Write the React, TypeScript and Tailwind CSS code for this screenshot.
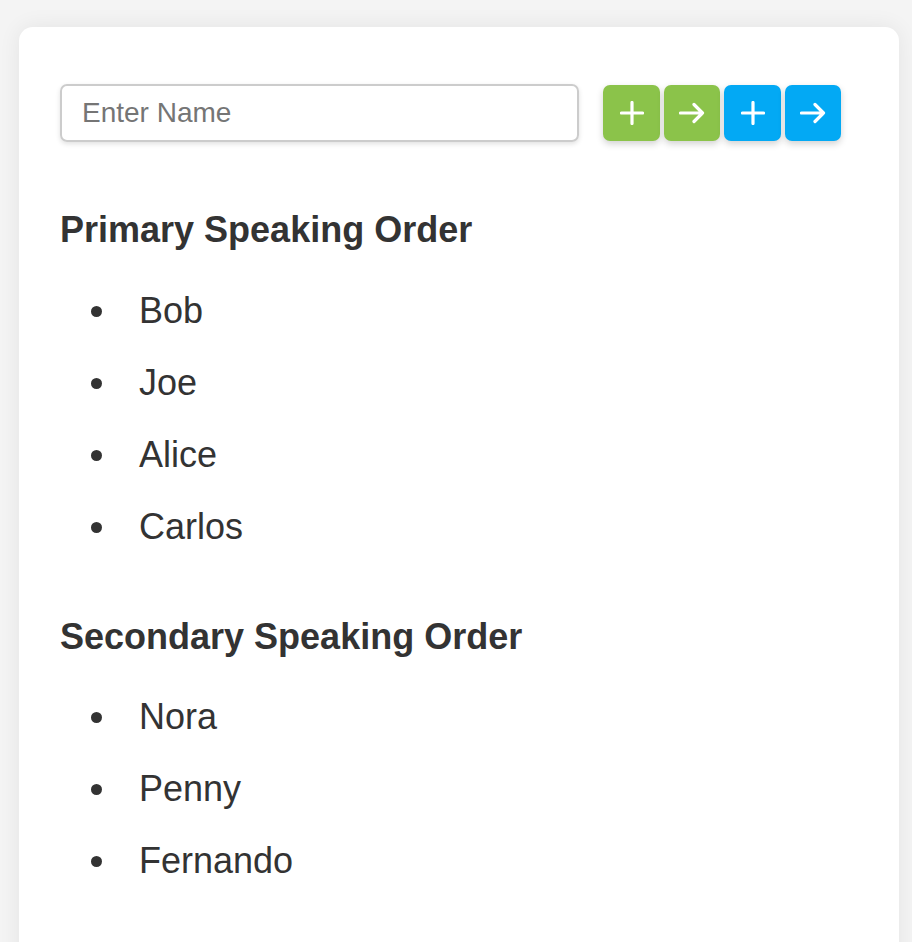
import React from "react";

function PlusIcon() {
  return (
    <svg width="24" height="24" viewBox="0 0 24 24" fill="none" stroke="white" strokeWidth="3.2" strokeLinecap="round">
      <path d="M12 1.5v21M1.5 12h21" />
    </svg>
  );
}

function ArrowIcon() {
  return (
    <svg width="26" height="22" viewBox="0 0 26 22" fill="none" stroke="white" strokeWidth="3.2" strokeLinecap="round" strokeLinejoin="round">
      <path d="M1.5 11h22M15 2.5l8.5 8.5-8.5 8.5" />
    </svg>
  );
}

function Item({ name }: { name: string }) {
  return (
    <li className="flex items-center h-[72px]">
      <span className="ml-[31px] w-[11px] h-[11px] rounded-full bg-[#333333] shrink-0" />
      <span className="ml-[37px] text-[36px] leading-[72px] text-[#333333]">{name}</span>
    </li>
  );
}

export default function App() {
  const primary = ["Bob", "Joe", "Alice", "Carlos"];
  const secondary = ["Nora", "Penny", "Fernando"];
  return (
    <div
      className="min-h-screen bg-[#f4f4f4] pt-[27px] pl-[19px] overflow-hidden"
      style={{ fontFamily: '"Liberation Sans", Arial, sans-serif' }}
    >
      <div className="w-[880px] bg-white rounded-[14px] shadow-[0_0_22px_rgba(0,0,0,0.07)] pl-[41px] pr-[41px] pt-[57px] pb-[80px]">
        <div className="flex items-center">
          <input
            className="w-[519px] h-[58px] border-2 border-[#cccccc] rounded-[7px] px-[20px] text-[28px] text-[#333333] placeholder:text-[#757575] shadow-[0_2px_5px_rgba(0,0,0,0.12)] outline-none"
            placeholder="Enter Name"
          />
          <div className="ml-[24px] flex gap-[4px]">
            <button className="w-[57px] h-[56px] rounded-[7px] bg-[#8bc34a] flex items-center justify-center shadow-[0_3px_7px_rgba(0,0,0,0.18)]">
              <PlusIcon />
            </button>
            <button className="w-[56px] h-[56px] rounded-[7px] bg-[#8bc34a] flex items-center justify-center shadow-[0_3px_7px_rgba(0,0,0,0.18)]">
              <ArrowIcon />
            </button>
            <button className="w-[57px] h-[56px] rounded-[7px] bg-[#03a9f4] flex items-center justify-center shadow-[0_3px_7px_rgba(0,0,0,0.18)]">
              <PlusIcon />
            </button>
            <button className="w-[56px] h-[56px] rounded-[7px] bg-[#03a9f4] flex items-center justify-center shadow-[0_3px_7px_rgba(0,0,0,0.18)]">
              <ArrowIcon />
            </button>
          </div>
        </div>

        <h2 className="mt-[66px] text-[36px] leading-[44px] font-bold text-[#333333]">Primary Speaking Order</h2>
        <ul className="mt-[23px]">
          {primary.map((n) => (
            <Item key={n} name={n} />
          ))}
        </ul>

        <h2 className="mt-[52px] text-[36px] leading-[44px] font-bold text-[#333333]">Secondary Speaking Order</h2>
        <ul className="mt-[22px]">
          {secondary.map((n) => (
            <Item key={n} name={n} />
          ))}
        </ul>
      </div>
    </div>
  );
}
